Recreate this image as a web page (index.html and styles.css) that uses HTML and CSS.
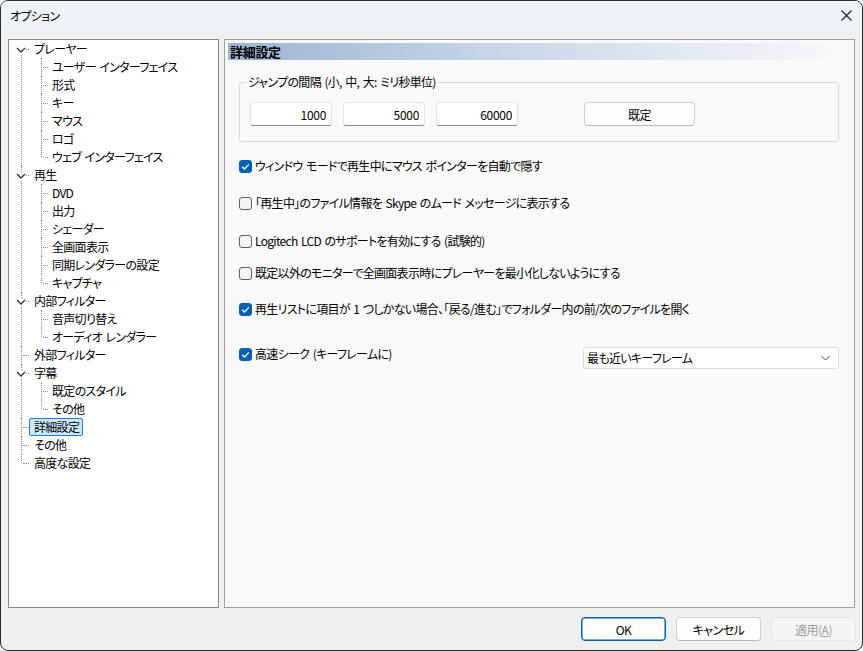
FILE: index.html
```html
<!DOCTYPE html>
<html lang="ja">
<head>
<meta charset="utf-8">
<title>オプション</title>
<link rel="stylesheet" href="styles.css">
</head>
<body>
<div class="window">
  <div class="titlebar">
    <span class="title">オプション</span>
    <span class="close"><svg width="11" height="11" viewBox="0 0 11 11"><path d="M0.5 0.5 L10.5 10.5 M10.5 0.5 L0.5 10.5" stroke="#1a1a1a" stroke-width="1.1" fill="none"/></svg></span>
  </div>
  <div class="main">
    <div class="tree-panel">
      <ul class="tree">
        <li>
          <div class="row"><span class="twisty"><svg class="chev" width="10" height="8" viewBox="0 0 10 8"><path d="M1 2 L5 6 L9 2" stroke="#333" stroke-width="1.3" fill="none"/></svg></span><span class="label">プレーヤー</span></div>
          <ul class="children">
            <li><div class="row"><span class="label">ユーザー インターフェイス</span></div></li>
            <li><div class="row"><span class="label">形式</span></div></li>
            <li><div class="row"><span class="label">キー</span></div></li>
            <li><div class="row"><span class="label">マウス</span></div></li>
            <li><div class="row"><span class="label">ロゴ</span></div></li>
            <li><div class="row"><span class="label">ウェブ インターフェイス</span></div></li>
          </ul>
        </li>
        <li>
          <div class="row"><span class="twisty"><svg class="chev" width="10" height="8" viewBox="0 0 10 8"><path d="M1 2 L5 6 L9 2" stroke="#333" stroke-width="1.3" fill="none"/></svg></span><span class="label">再生</span></div>
          <ul class="children">
            <li><div class="row"><span class="label">DVD</span></div></li>
            <li><div class="row"><span class="label">出力</span></div></li>
            <li><div class="row"><span class="label">シェーダー</span></div></li>
            <li><div class="row"><span class="label">全画面表示</span></div></li>
            <li><div class="row"><span class="label">同期レンダラーの設定</span></div></li>
            <li><div class="row"><span class="label">キャプチャ</span></div></li>
          </ul>
        </li>
        <li>
          <div class="row"><span class="twisty"><svg class="chev" width="10" height="8" viewBox="0 0 10 8"><path d="M1 2 L5 6 L9 2" stroke="#333" stroke-width="1.3" fill="none"/></svg></span><span class="label">内部フィルター</span></div>
          <ul class="children">
            <li><div class="row"><span class="label">音声切り替え</span></div></li>
            <li><div class="row"><span class="label">オーディオ レンダラー</span></div></li>
          </ul>
        </li>
        <li><div class="row"><span class="twisty leaf"></span><span class="label">外部フィルター</span></div></li>
        <li>
          <div class="row"><span class="twisty"><svg class="chev" width="10" height="8" viewBox="0 0 10 8"><path d="M1 2 L5 6 L9 2" stroke="#333" stroke-width="1.3" fill="none"/></svg></span><span class="label">字幕</span></div>
          <ul class="children">
            <li><div class="row"><span class="label">既定のスタイル</span></div></li>
            <li><div class="row"><span class="label">その他</span></div></li>
          </ul>
        </li>
        <li><div class="row"><span class="twisty leaf"></span><span class="label selected">詳細設定</span></div></li>
        <li><div class="row"><span class="twisty leaf"></span><span class="label">その他</span></div></li>
        <li><div class="row"><span class="twisty leaf"></span><span class="label">高度な設定</span></div></li>
      </ul>
    </div>
    <div class="page">
      <div class="page-header">詳細設定</div>
      <div class="page-body">
        <fieldset class="group">
          <legend>ジャンプの間隔 (小, 中, 大: ミリ秒単位)</legend>
          <div class="jump-row">
            <input class="edit" type="text" value="1000">
            <input class="edit" type="text" value="5000">
            <input class="edit" type="text" value="60000">
            <button class="btn default-btn" type="button">既定</button>
          </div>
        </fieldset>
        <div class="check c1"><span class="box on"><svg width="13" height="13" viewBox="0 0 13 13"><path d="M3.2 6.8 L5.5 9 L9.8 4.4" stroke="#fff" stroke-width="1.3" fill="none"/></svg></span><span class="ctext">ウィンドウ モードで再生中にマウス ポインターを自動で隠す</span></div>
        <div class="check c2"><span class="box"></span><span class="ctext">「再生中」のファイル情報を Skype のムード メッセージに表示する</span></div>
        <div class="check c3"><span class="box"></span><span class="ctext">Logitech LCD のサポートを有効にする (試験的)</span></div>
        <div class="check c4"><span class="box"></span><span class="ctext">既定以外のモニターで全画面表示時にプレーヤーを最小化しないようにする</span></div>
        <div class="check c5"><span class="box on"><svg width="13" height="13" viewBox="0 0 13 13"><path d="M3.2 6.8 L5.5 9 L9.8 4.4" stroke="#fff" stroke-width="1.3" fill="none"/></svg></span><span class="ctext">再生リストに項目が 1 つしかない場合、「戻る/進む」でフォルダー内の前/次のファイルを開く</span></div>
        <div class="seek-row">
          <div class="check c6"><span class="box on"><svg width="13" height="13" viewBox="0 0 13 13"><path d="M3.2 6.8 L5.5 9 L9.8 4.4" stroke="#fff" stroke-width="1.3" fill="none"/></svg></span><span class="ctext">高速シーク (キーフレームに)</span></div>
          <div class="combo"><span class="combo-text">最も近いキーフレーム</span><svg width="9" height="6" viewBox="0 0 9 6"><path d="M0.5 1 L4.5 5 L8.5 1" stroke="#555" stroke-width="1" fill="none"/></svg></div>
        </div>
      </div>
    </div>
  </div>
  <div class="footer">
    <button class="btn fbtn ok" type="button">OK</button>
    <button class="btn fbtn" type="button">キャンセル</button>
    <button class="btn fbtn disabled" type="button">適用(<u>A</u>)</button>
  </div>
</div>
</body>
</html>
```
FILE: styles.css
```css
html, body {
  margin: 0;
  padding: 0;
  background: #ffffff;
}
body {
  font-family: "Noto Sans CJK JP", "Noto Sans", sans-serif;
  font-feature-settings: "palt";
  font-size: 12px;
  line-height: 16px;
  letter-spacing: -0.7px;
  word-spacing: 1.5px;
  color: #000;
}
.window {
  width: 863px;
  height: 651px;
  box-sizing: border-box;
  border: 1px solid #2e2e2e;
  border-radius: 8px;
  background: #f0f0f0;
  overflow: hidden;
  display: flex;
  flex-direction: column;
}
.titlebar {
  height: 30px;
  flex: none;
  background: #eef3f9;
  display: flex;
  align-items: center;
  justify-content: space-between;
  padding: 0 10px 0 9px;
}
.title {
  font-size: 12px;
  line-height: 16px;
  margin-top: -1px;
}
.close {
  display: flex;
  margin-top: -2px;
}
.main {
  height: 569px;
  flex: none;
  padding: 8px 7px 0 7px;
  display: flex;
  gap: 5px;
}
.tree-panel {
  width: 211px;
  flex: none;
  box-sizing: border-box;
  border: 1px solid #828790;
  background: #fff;
}
.tree, .children {
  list-style: none;
  margin: 0;
  padding: 0;
}
.tree > li, .children > li {
  position: relative;
}
.tree > li::before {
  content: "";
  position: absolute;
  left: 12px;
  top: 0;
  bottom: 0;
  border-left: 1px dotted #8c8c8c;
}
.tree > li:first-child::before { top: 9px; }
.tree > li:last-child::before { bottom: auto; height: 9px; }
.children > li::before {
  content: "";
  position: absolute;
  left: 32px;
  top: 0;
  height: 18px;
  border-left: 1px dotted #8c8c8c;
}
.children > li:last-child::before { height: 9px; }
.row {
  position: relative;
  height: 18px;
  display: flex;
  align-items: center;
  white-space: nowrap;
}
.tree > li > .row { padding-left: 6px; }
.tree > li > .row::before {
  content: "";
  position: absolute;
  left: 14px;
  top: 9px;
  width: 6px;
  border-top: 1px dotted #8c8c8c;
}
.children > li > .row { padding-left: 39px; }
.children > li > .row::before {
  content: "";
  position: absolute;
  left: 34px;
  top: 9px;
  width: 5px;
  border-top: 1px dotted #8c8c8c;
}
.twisty {
  width: 14px;
  height: 18px;
  display: flex;
  align-items: center;
  flex: none;
}
.chev {
  position: relative;
  z-index: 1;
  background: #fff;
  display: block;
  margin-top: 1px;
  margin-left: 1px;
}
.label {
  box-sizing: border-box;
  height: 18px;
  line-height: 16px;
  padding: 0 3px 0 4px;
  border: 1px solid transparent;
  border-radius: 2px;
}
.children .label { padding-left: 3px; }
.label.selected {
  background: #cce8ff;
  border-color: #1a7fd6;
}
.page {
  flex: 1;
  box-sizing: border-box;
  border: 1px solid #a0a0a0;
  background: #f9f9f9;
  padding: 3px;
  display: flex;
  flex-direction: column;
}
.page-header {
  height: 17px;
  line-height: 17px;
  padding-left: 2px;
  font-size: 13px;
  font-weight: bold;
  letter-spacing: -0.3px;
  background: linear-gradient(to right, #9cb4d4 0%, #c9d7e8 45%, #f0f3f7 90%, #f9f9f9 100%);
}
.page-body {
  padding: 0 12px 0 11px;
  display: flex;
  flex-direction: column;
}
.group {
  margin: 14px 0 0 0;
  min-width: 0;
  padding: 12px 10px 15px 10px;
  border: 1px solid #dcdcdc;
  border-radius: 3px;
}
.group legend {
  padding: 0 2px;
  margin-left: -4px;
  line-height: 16px;
  font-size: 12px;
}
.jump-row {
  display: flex;
  align-items: center;
  gap: 11px;
}
.edit {
  width: 82px;
  height: 24px;
  box-sizing: border-box;
  border: 1px solid #e3e3e3;
  border-bottom-color: #8a8a8a;
  border-radius: 3px;
  background: #fff;
  font-family: inherit;
  font-feature-settings: "palt";
  font-size: 12px;
  letter-spacing: -0.3px;
  text-align: right;
  padding: 0 5px 0 4px;
  margin: 0;
  color: #000;
  outline: none;
}
.btn {
  height: 24px;
  box-sizing: border-box;
  border: 1px solid #d0d0d0;
  border-bottom-color: #b8b8b8;
  border-radius: 4px;
  background: #fdfdfd;
  font-family: inherit;
  font-feature-settings: "palt";
  font-size: 12px;
  letter-spacing: -0.5px;
  color: #000;
  padding: 0;
  margin: 0;
}
.default-btn {
  width: 111px;
  margin-left: 55px;
}
.check {
  display: flex;
  align-items: center;
  height: 20px;
  white-space: nowrap;
}
.c1 { margin-top: 14px; }
.c2 { margin-top: 17px; }
.c3 { margin-top: 18px; }
.c4 { margin-top: 12px; }
.c5 { margin-top: 16px; }
.box {
  width: 13px;
  height: 13px;
  box-sizing: border-box;
  border: 1px solid #5f5f5f;
  border-radius: 3px;
  background: #f4f4f4;
  margin-right: 3px;
  flex: none;
  display: flex;
}
.box.on {
  border-color: #005fb8;
  background: #005fb8;
}
.box.on svg { margin: -1px; }
.seek-row {
  margin-top: 28px;
  display: flex;
  align-items: flex-start;
  justify-content: space-between;
}
.seek-row .check {
  height: 14px;
}
.combo {
  width: 256px;
  height: 22px;
  box-sizing: border-box;
  border: 1px solid #dedede;
  border-radius: 3px;
  background: #fff;
  display: flex;
  align-items: center;
  justify-content: space-between;
  padding: 0 8px 0 3px;
}
.footer {
  height: 42px;
  flex: none;
  display: flex;
  align-items: center;
  justify-content: flex-end;
  gap: 10px;
  padding-right: 6px;
}
.fbtn {
  width: 85px;
}
.fbtn.ok {
  border: 1px solid #005fb8;
  box-shadow: inset 0 0 0 0.5px #005fb8;
}
.fbtn.disabled {
  color: #9d9d9d;
  background: #f5f5f5;
  border-color: #e5e5e5;
}
```
